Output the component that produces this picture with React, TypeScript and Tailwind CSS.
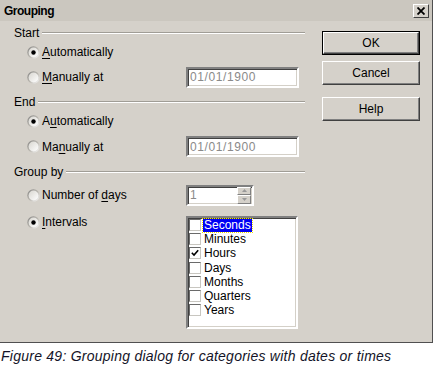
import React from 'react';

const sunken =
  'border-2 border-t-[#808080] border-l-[#808080] border-b-white border-r-white shadow-[inset_1px_1px_0_#404040,inset_-1px_-1px_0_#d4d0c8]';

function Mnemonic({ text, at }: { text: string; at: number }) {
  return (
    <span>
      {text.slice(0, at)}
      <span className="underline underline-offset-[2px]">{text[at]}</span>
      {text.slice(at + 1)}
    </span>
  );
}

function Radio({ checked }: { checked?: boolean }) {
  return (
    <svg width="13" height="13" viewBox="0 0 13 13" className="shrink-0">
      <defs>
        <linearGradient id="rOuter" x1="0" y1="0" x2="1" y2="1">
          <stop offset="0" stopColor="#808080" />
          <stop offset="0.5" stopColor="#b8b5ae" />
          <stop offset="1" stopColor="#ffffff" />
        </linearGradient>
        <linearGradient id="rInner" x1="0" y1="0" x2="1" y2="1">
          <stop offset="0" stopColor="#d8d6d0" />
          <stop offset="1" stopColor="#ffffff" />
        </linearGradient>
      </defs>
      <circle cx="6.5" cy="6.5" r="6.2" fill="url(#rOuter)" />
      <circle cx="6.5" cy="6.5" r="4.9" fill="url(#rInner)" />
      {checked && <circle cx="6.5" cy="6.5" r="2.2" fill="#000" />}
    </svg>
  );
}

function Header({ label }: { label: string }) {
  return (
    <div className="flex items-center h-[14px]">
      <span>{label}</span>
      <div className="flex-1 ml-[3px] h-[2px] border-t border-t-[#a09d96] border-b border-b-white" />
    </div>
  );
}

function RadioRow({ checked, text, at, h, children }: { checked?: boolean; text: string; at: number; h: string; children?: React.ReactNode }) {
  return (
    <div className={`flex items-center ${h}`}>
      <div className="w-[172px] flex items-center pl-[13px]">
        <Radio checked={checked} />
        <span className="ml-[2px]">
          <Mnemonic text={text} at={at} />
        </span>
      </div>
      {children}
    </div>
  );
}

function DateField() {
  return (
    <div className={`w-[113px] h-[21px] bg-white ${sunken} flex items-center pl-[2px] text-[#8a8a8a] tracking-[0.6px]`}>
      01/01/1900
    </div>
  );
}

function Check({ checked }: { checked?: boolean }) {
  return (
    <div className="w-[12px] h-[12px] shrink-0 bg-white border border-t-[#6a6a6a] border-l-[#6a6a6a] border-b-[#c8c6c0] border-r-[#c8c6c0] flex items-center justify-center">
      {checked && (
        <svg width="8" height="8" viewBox="0 0 8 8">
          <path d="M0.8 3.8 L3 6 L7.2 1.2" stroke="#000" strokeWidth="1.6" fill="none" />
        </svg>
      )}
    </div>
  );
}

function PushButton({ label, isDefault, mt }: { label: string; isDefault?: boolean; mt: string }) {
  return (
    <div className={`${mt} h-[24px] w-[98px] ${isDefault ? 'border border-black' : ''}`}>
      <div className="h-full w-full border border-t-white border-l-white border-b-[#404040] border-r-[#404040] shadow-[inset_-1px_-1px_0_#808080] flex items-center justify-center">
        {label}
      </div>
    </div>
  );
}

const units = ['Seconds', 'Minutes', 'Hours', 'Days', 'Months', 'Quarters', 'Years'];

export default function App() {
  return (
    <div className="w-[435px] h-[367px] bg-white font-['Liberation_Sans',Arial,sans-serif] text-[12px] leading-[14px] text-black">
      <div className="w-[433px] h-[343px] bg-[#d5d1ca] border-r border-b border-r-[#505050] border-b-[#505050] flex flex-col">
        {/* Title bar */}
        <div className="h-[21px] bg-[#cbc7bf] flex items-center pl-[4px] pr-[3px]">
          <span className="font-bold tracking-[-0.5px] text-[12px]">Grouping</span>
          <div className="ml-auto w-[16px] h-[14px] border border-t-white border-l-white border-b-[#404040] border-r-[#404040] flex items-center justify-center bg-[#d5d1ca]">
            <svg width="8" height="8" viewBox="0 0 8 8">
              <path d="M0.5 0.5 L7.5 7.5 M7.5 0.5 L0.5 7.5" stroke="#000" strokeWidth="1.8" />
            </svg>
          </div>
        </div>

        <div className="flex flex-1">
          {/* Left column */}
          <div className="w-[305px] pl-[14px] flex flex-col">
            <div className="mt-[5px]">
              <Header label="Start" />
            </div>
            <RadioRow checked text="Automatically" at={0} h="h-[24px]" />
            <RadioRow text="Manually at" at={0} h="h-[26px]">
              <DateField />
            </RadioRow>

            <div className="mt-[5px]">
              <Header label="End" />
            </div>
            <RadioRow checked text="Automatically" at={1} h="h-[24px]" />
            <RadioRow text="Manually at" at={2} h="h-[27px]">
              <DateField />
            </RadioRow>

            <div className="mt-[5px]">
              <Header label="Group by" />
            </div>
            <RadioRow text="Number of days" at={10} h="h-[32px]">
              <div className={`w-[68px] h-[21px] bg-white ${sunken} flex items-stretch`}>
                <span className="flex-1 flex items-center pl-[2px] text-[#8a8a8a]">1</span>
                <div className="w-[14px] flex flex-col mr-[1px] my-[0px] bg-[#d5d1ca]">
                  <div className="flex-1 border border-t-white border-l-white border-b-[#808080] border-r-[#808080] flex items-center justify-center">
                    <svg width="5" height="3" viewBox="0 0 5 3"><path d="M2.5 0 L5 3 L0 3 Z" fill="#9a9a9a" /></svg>
                  </div>
                  <div className="flex-1 border border-t-white border-l-white border-b-[#808080] border-r-[#808080] flex items-center justify-center">
                    <svg width="5" height="3" viewBox="0 0 5 3"><path d="M0 0 L5 0 L2.5 3 Z" fill="#9a9a9a" /></svg>
                  </div>
                </div>
              </div>
            </RadioRow>

            <div className="flex items-start">
              <div className="w-[172px] h-[22px] flex items-center pl-[13px]">
                <Radio checked />
                <span className="ml-[2px]">
                  <Mnemonic text="Intervals" at={0} />
                </span>
              </div>
              <div className={`mt-[5px] w-[112px] h-[113px] bg-white ${sunken} pl-[1px] pt-[0px] flex flex-col`}>
                {units.map((u, i) => (
                  <div key={u} className="h-[14.2px] flex items-center">
                    <Check checked={u === 'Hours'} />
                    {i === 0 ? (
                      <span className="ml-[2px] px-[1px] bg-[#0000f4] text-white outline outline-1 outline-dotted outline-[#f0e000] leading-[13px]">
                        {u}
                      </span>
                    ) : (
                      <span className="ml-[3px]">{u}</span>
                    )}
                  </div>
                ))}
              </div>
            </div>
          </div>

          {/* Buttons */}
          <div className="ml-[17px] flex flex-col">
            <PushButton label="OK" isDefault mt="mt-[10px]" />
            <PushButton label="Cancel" mt="mt-[6px]" />
            <PushButton label="Help" mt="mt-[12px]" />
          </div>
        </div>
      </div>

      <div className="mt-[5px] pl-[1px] italic text-[14px] leading-[16px] tracking-[0.25px] text-[#141428]">
        Figure 49: Grouping dialog for categories with dates or times
      </div>
    </div>
  );
}
